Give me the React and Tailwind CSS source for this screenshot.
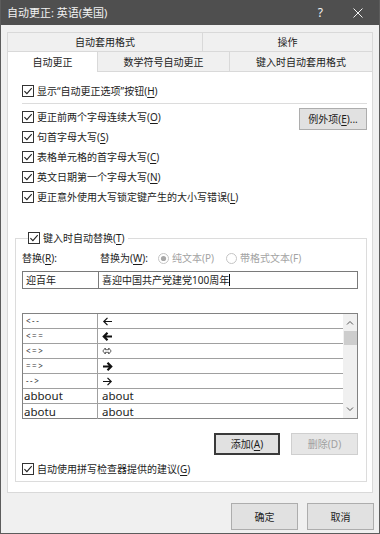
import React from "react";

const FONT = { fontFamily: '"Noto Sans", "Noto Sans CJK SC", sans-serif' };

const Check = () => (
  <svg width="12" height="12" viewBox="0 0 12 12" className="shrink-0">
    <rect x="0.5" y="0.5" width="11" height="11" fill="#fff" stroke="#333" />
    <path d="M2.4 6.1 L4.9 8.6 L9.7 3.1" fill="none" stroke="#222" strokeWidth="1.1" />
  </svg>
);

const Key = ({ pre, k, post = ")" }) => (
  <span>
    {pre}
    <span className="underline underline-offset-2">{k}</span>
    {post}
  </span>
);

const CheckRow = ({ pre, k, post, className = "h-[20px]" }) => (
  <div className={`flex items-center gap-[3px] ${className}`}>
    <Check />
    <Key pre={pre} k={k} post={post} />
  </div>
);

const Radio = ({ checked }) => (
  <svg width="11" height="11" viewBox="0 0 11 11" className="shrink-0">
    <circle cx="5.5" cy="5.5" r="5" fill="#fff" stroke="#c4c4c4" />
    {checked && <circle cx="5.5" cy="5.5" r="2.6" fill="#a8a8a8" />}
  </svg>
);

const Arrow = ({ dir, bold, hollow }) => {
  if (hollow) {
    return (
      <svg width="10" height="8" viewBox="0 0 10 8">
        <path d="M0.8 4 L3.3 1 V2.7 H6.7 V1 L9.2 4 L6.7 7 V5.3 H3.3 V7 Z" fill="none" stroke="#333" strokeWidth="0.8" />
      </svg>
    );
  }
  const d = dir === "l" ? "M10 5.5 H2 M5.5 1.8 L1.8 5.5 L5.5 9.2" : "M1 5.5 H9 M5.5 1.8 L9.2 5.5 L5.5 9.2";
  return (
    <svg width="11" height="11" viewBox="0 0 11 11">
      <path d={d} fill="none" stroke="#111" strokeWidth={bold ? 2.2 : 1.2} strokeLinejoin="miter" />
    </svg>
  );
};

const rows = [
  { a: "<--", b: <Arrow dir="l" />, sym: true },
  { a: "<==", b: <Arrow dir="l" bold />, sym: true },
  { a: "<=>", b: <Arrow hollow />, sym: true },
  { a: "==>", b: <Arrow dir="r" bold />, sym: true },
  { a: "-->", b: <Arrow dir="r" />, sym: true },
  { a: "abbout", b: "about" },
  { a: "abotu", b: "about" },
];

const Btn = ({ children, className = "" }) => (
  <div className={`flex items-center justify-center bg-[#e1e1e1] border border-[#adadad] ${className}`}>
    {children}
  </div>
);

export default function App() {
  return (
    <div
      style={FONT}
      className="w-[380px] h-[534px] bg-[#f0f0f0] flex flex-col border-x border-b border-[#5c5c5c] text-[10px] leading-none text-[#1c1c1c]"
    >
      {/* title bar */}
      <div className="h-[25px] shrink-0 bg-[#4f4f4f] flex items-center pl-[6px] text-[#f2f2f2] text-[11px]">
        <span>自动更正: 英语(美国)</span>
        <span className="ml-auto mr-[30px] text-[12px]">?</span>
        <svg width="10" height="10" viewBox="0 0 10 10" className="mr-[16px]">
          <path d="M0.5 0.5 L9.5 9.5 M9.5 0.5 L0.5 9.5" stroke="#f2f2f2" strokeWidth="1" />
        </svg>
      </div>

      <div className="px-[6px] pt-[7px]">
        {/* tabs */}
        <div className="flex h-[20px]">
          <div className="w-[196px] flex items-center justify-center border border-[#d9d9d9] bg-[#f0f0f0]">自动套用格式</div>
          <div className="flex-1 flex items-center justify-center border-y border-r border-[#d9d9d9] bg-[#f0f0f0]">操作</div>
        </div>
        <div className="flex h-[20px]">
          <div className="w-[91px] flex items-center justify-center border-x border-[#d9d9d9] bg-white">自动更正</div>
          <div className="w-[132px] flex items-center justify-center border-r border-b border-[#d9d9d9] bg-[#f0f0f0]">数学符号自动更正</div>
          <div className="flex-1 flex items-center justify-center border-r border-b border-[#d9d9d9] bg-[#f0f0f0]">键入时自动套用格式</div>
        </div>

        {/* panel */}
        <div className="h-[421px] bg-white border-x border-b border-[#d9d9d9] pl-[14px] pr-[5px] pt-[9px] flex flex-col">
          <CheckRow pre={"显示\u201c自动更正选项\u201d按钮("} k="H" />
          <div className="h-px bg-[#dcdcdc] mt-[2px]" />
          <div className="flex mt-[3px]">
            <div className="flex flex-col">
              <CheckRow pre="更正前两个字母连续大写(" k="O" />
              <CheckRow pre="句首字母大写(" k="S" />
              <CheckRow pre="表格单元格的首字母大写(" k="C" />
              <CheckRow pre="英文日期第一个字母大写(" k="N" />
              <CheckRow pre="更正意外使用大写锁定键产生的大小写错误(" k="L" />
            </div>
            <Btn className="ml-auto mt-[1px] w-[68px] h-[22px]">
              <Key pre="例外项(" k="E" post=")..." />
            </Btn>
          </div>

          {/* group */}
          <fieldset className="-ml-[7px] mt-[21px] border border-[#dcdcdc] pl-[6px] pr-[8px] pb-[4px]">
            <legend className="ml-[6px] pr-[3px] h-[20px] flex items-center">
              <div className="flex items-center gap-[3px]">
                <Check />
                <Key pre="键入时自动替换(" k="T" />
              </div>
            </legend>
            <div className="flex items-center h-[16px] mt-[2px]">
              <div className="w-[77px]">
                <Key pre="替换(" k="R" post="):" />
              </div>
              <div className="ml-[1px]">
                <Key pre="替换为(" k="W" post="):" />
              </div>
              <div className="flex items-center ml-[10px] gap-[3px] text-[#a3a3a3]">
                <Radio checked />
                <span>纯文本(P)</span>
              </div>
              <div className="flex items-center ml-[12px] gap-[3px] text-[#a3a3a3]">
                <Radio />
                <span>带格式文本(F)</span>
              </div>
            </div>
            <div className="flex h-[18px] mt-[5px]">
              <div className="w-[77px] border border-[#7a7a7a] flex items-center pl-[3px]">迎百年</div>
              <div className="flex-1 -ml-px border border-[#7a7a7a] flex items-center pl-[3px]">
                喜迎中国共产党建党100周年
                <span className="w-px h-[12px] bg-black" />
              </div>
            </div>

            {/* list */}
            <div className="mt-[24px] h-[106px] border border-[#828282] flex">
              <div className="flex-1 flex flex-col">
                {rows.map((r, i) => (
                  <div key={i} className={`h-[15px] shrink-0 flex ${i < rows.length - 1 ? "border-b border-[#a0a0a0]" : ""}`}>
                    <div
                      className={`w-[75px] border-r border-[#a0a0a0] flex items-center ${
                        r.sym ? "pl-[3px] text-[8px] tracking-[1.5px] text-[#333]" : "pl-[1px] text-[11.5px]"
                      }`}
                    >
                      {r.a}
                    </div>
                    <div className={`flex-1 flex items-center ${r.sym ? "pl-[4px]" : "pl-[4px] text-[11.5px]"}`}>
                      {r.b}
                    </div>
                  </div>
                ))}
              </div>
              <div className="w-[14px] bg-[#f0f0f0] flex flex-col items-center">
                <svg width="8" height="16" viewBox="0 0 8 16" className="mt-[1px]">
                  <path d="M1 9.5 L4 6.5 L7 9.5" fill="none" stroke="#555" strokeWidth="1" />
                </svg>
                <div className="w-[13px] h-[14px] bg-[#cdcdcd]" />
                <svg width="8" height="16" viewBox="0 0 8 16" className="mt-auto mb-[1px]">
                  <path d="M1 6.5 L4 9.5 L7 6.5" fill="none" stroke="#555" strokeWidth="1" />
                </svg>
              </div>
            </div>

            <div className="flex justify-end gap-[11px] mt-[14px]">
              <div className="w-[66px] h-[22px] flex items-center justify-center bg-[#e1e1e1] border-2 border-[#3a3a3a]">
                <Key pre="添加(" k="A" />
              </div>
              <Btn className="w-[67px] h-[22px] text-[#a0a0a0] border-[#cfcfcf] bg-[#e6e6e6]">删除(D)</Btn>
            </div>

            <CheckRow pre="自动使用拼写检查器提供的建议(" k="G" className="h-[16px] mt-[6px]" />
          </fieldset>
        </div>
      </div>

      {/* dialog buttons */}
      <div className="flex justify-end gap-[9px] pr-[5px] mt-[10px]">
        <Btn className="w-[67px] h-[27px]">确定</Btn>
        <Btn className="w-[67px] h-[27px]">取消</Btn>
      </div>
    </div>
  );
}
